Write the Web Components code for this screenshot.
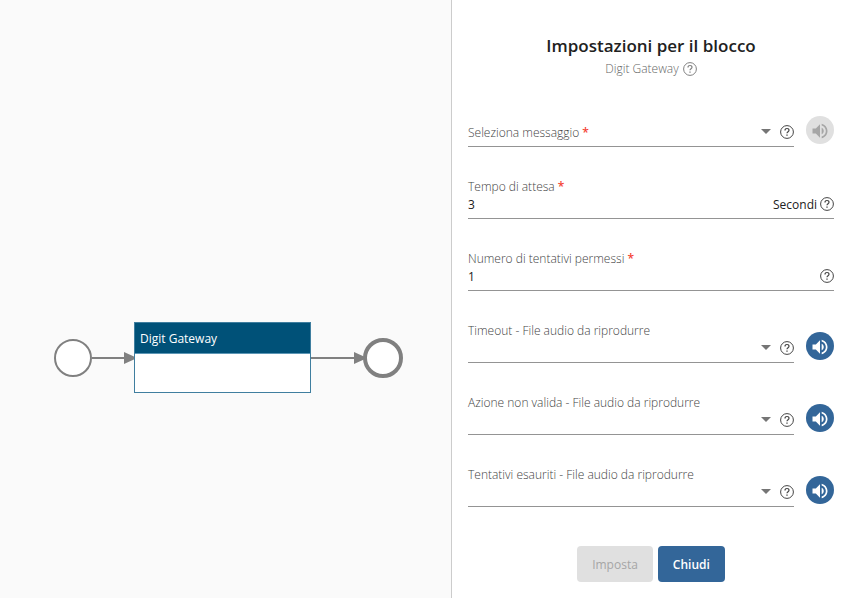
<!DOCTYPE html>
<html lang="it">
<head>
<meta charset="utf-8">
<title>Impostazioni per il blocco</title>
<style>
  body { margin: 0; font: 12px/18px "Open Sans", "Noto Sans", sans-serif; color: #212121; background: #fff; }
</style>
</head>
<body>
<flow-editor>
  <flow-canvas slot="canvas">
    <flow-event kind="start" label="Inizio" style="left:54px;top:339px"></flow-event>
    <flow-link style="left:92px;top:352px;width:43px"></flow-link>
    <flow-block style="left:134px;top:322px">Digit Gateway</flow-block>
    <flow-link style="left:311px;top:352px;width:54px"></flow-link>
    <flow-event kind="end" label="Fine" style="left:363px;top:338px"></flow-event>
  </flow-canvas>
  <settings-panel slot="panel">
    <span slot="title">Impostazioni per il blocco</span>
    <span slot="subtitle">Digit Gateway</span>
    <form-field kind="select" label="Seleziona messaggio" required inside muted></form-field>
    <form-field label="Tempo di attesa" value="3" required>Secondi</form-field>
    <form-field label="Numero di tentativi permessi" value="1" required></form-field>
    <form-field kind="select" label="Timeout - File audio da riprodurre"></form-field>
    <form-field kind="select" label="Azione non valida - File audio da riprodurre"></form-field>
    <form-field kind="select" label="Tentativi esauriti - File audio da riprodurre"></form-field>
    <action-button slot="actions" disabled>Imposta</action-button>
    <action-button slot="actions">Chiudi</action-button>
  </settings-panel>
</flow-editor>
<script>
class Base extends HTMLElement {
  connectedCallback() {
    if (!this.shadowRoot) this.attachShadow({ mode: 'open' }).innerHTML = this.render();
  }
}

customElements.define('flow-editor', class extends Base {
  render() { return `
    <style>
      :host { display: grid; grid-template-columns: minmax(0, 1fr) 393px; min-height: 100vh; }
    </style>
    <slot name="canvas"></slot><slot name="panel"></slot>`; }
});

customElements.define('flow-canvas', class extends Base {
  render() { return `
    <style>
      :host { display: block; position: relative; overflow: hidden; background: #fafafa; }
      ::slotted(*) { position: absolute; }
    </style>
    <slot></slot>`; }
});

customElements.define('flow-event', class extends Base {
  render() {
    const end = this.getAttribute('kind') === 'end';
    const size = end ? 40 : 38, stroke = end ? 4 : 2;
    return `
    <style>
      :host { display: block; }
      svg { display: block; }
    </style>
    <svg width="${size}" height="${size}" role="img" aria-label="${this.getAttribute('label')}">
      <circle cx="${size / 2}" cy="${size / 2}" r="${(size - stroke) / 2}" fill="#fff" stroke="#808080" stroke-width="${stroke}"/>
    </svg>`; }
});

customElements.define('flow-link', class extends Base {
  render() { return `
    <style>
      :host { display: flex; align-items: center; height: 12px; }
      i { flex: 1; height: 2px; background: #808080; }
      svg { display: block; }
    </style>
    <i></i><svg width="11" height="12" aria-hidden="true"><path d="M0 0v12l11-5V5z" fill="#808080"/></svg>`; }
});

customElements.define('flow-block', class extends Base {
  render() { return `
    <style>
      :host { display: block; box-sizing: border-box; width: 177px; border: 1px solid #3f7e9f; background: #fff; }
      header { padding: 7px 5px 5px; background: #005178; border-bottom: 1px solid #5c96b5; color: #fff; }
      div { height: 38px; }
    </style>
    <header><slot></slot></header><div></div>`; }
});

customElements.define('help-button', class extends Base {
  render() { return `
    <style>
      :host { display: block; flex: none; color: #444; }
      button { display: block; padding: 0; border: 0; background: none; color: inherit; cursor: pointer; }
      svg { display: block; }
    </style>
    <button type="button" aria-label="Aiuto">
      <svg width="14" height="14" viewBox="0 0 14 14" fill="none" stroke="currentColor">
        <circle cx="7" cy="7" r="6.4"/>
        <path stroke-width="1.2" d="M5 5.500C5 4.200 5.900 3.500 7 3.500s2 .7 2 1.800C9 6.700 7 6.700 7 8.300"/>
        <path stroke-width="1.3" d="M7 9.500v1.300"/>
      </svg>
    </button>`; }
});

customElements.define('audio-button', class extends Base {
  render() { return `
    <style>
      :host { display: block; flex: none; }
      button { box-sizing: border-box; display: grid; place-items: center; width: 28px; height: 28px; padding: 2px 0 0; border: 0; border-radius: 50%; background: #336699; color: #fff; cursor: pointer; }
      button:disabled { background: #e0e0e0; color: #a6a6a6; cursor: default; }
      svg { display: block; }
    </style>
    <button type="button" aria-label="Riproduci audio" ${this.hasAttribute('disabled') ? 'disabled' : ''}>
      <svg width="20" height="20" viewBox="0 0 24 24" fill="currentColor">
        <path d="M3 9v6h4l5 5V4L7 9H3zm13.500 3c0-1.770-1.020-3.290-2.500-4.030v8.050c1.480-.73 2.500-2.250 2.500-4.020zM14 3.230v2.060c2.890.86 5 3.540 5 6.710s-2.110 5.850-5 6.710v2.060c4.010-.91 7-4.490 7-8.770s-2.990-7.860-7-8.770z"/>
      </svg>
    </button>`; }
});

customElements.define('form-field', class extends Base {
  render() {
    const select = this.getAttribute('kind') === 'select';
    const required = this.hasAttribute('required');
    return `
    <style>
      :host { display: flex; align-items: flex-end; gap: 12px; }
      .field { flex: 1; min-width: 0; display: grid; grid-template-rows: 18px 18px; padding-bottom: 4px; border-bottom: 1px solid #949494; }
      label { grid-area: 1 / 1; color: #444; font-weight: 300; pointer-events: none; }
      :host([inside]) label { grid-row: 2; }
      b { font-weight: 600; color: #f44336; }
      .row { grid-area: 2 / 1; display: flex; align-items: center; gap: 3px; min-width: 0; }
      .pick { flex: 1; min-width: 0; display: grid; align-items: center; }
      .pick > * { grid-area: 1 / 1; }
      .caret { justify-self: end; pointer-events: none; margin: 0 6px 4px 0; }
      help-button { padding-bottom: 2px; }
      input, select { appearance: none; flex: 1; min-width: 0; width: 100%; height: 18px; margin: 0; padding: 0; border: 0; outline: 0; background: none; font: inherit; color: #212121; }
      audio-button { padding-bottom: 3px; }
    </style>
    <div class="field">
      <label for="control">${this.getAttribute('label')}${required ? ' <b>*</b>' : ''}</label>
      <div class="row">
        ${select ? `
        <div class="pick">
          <select id="control" ${required ? 'required' : ''}><option value=""></option></select>
          <svg class="caret" width="10" height="5" aria-hidden="true"><path d="M0 0h10L5 5z" fill="#757575"/></svg>
        </div>` : `<input id="control" type="text" inputmode="numeric" value="${this.getAttribute('value')}" ${required ? 'required' : ''}>`}
        <slot></slot>
        <help-button></help-button>
      </div>
    </div>
    ${select ? `<audio-button ${this.hasAttribute('muted') ? 'disabled' : ''}></audio-button>` : ''}`; }
});

customElements.define('action-button', class extends Base {
  render() { return `
    <style>
      :host { display: block; }
      button { height: 36px; padding: 2px 15px 0; border: 0; border-radius: 4px; background: #336699; color: #fff; font: inherit; font-weight: 600; cursor: pointer; }
      button:disabled { background: #e0e0e0; color: #a6a6a6; font-weight: 400; cursor: default; }
    </style>
    <button type="button" ${this.hasAttribute('disabled') ? 'disabled' : ''}><slot></slot></button>`; }
});

customElements.define('settings-panel', class extends Base {
  render() { return `
    <style>
      :host { display: block; box-sizing: border-box; padding: 34px 10px 16px 16px; border-left: 1px solid #ccc; background: #fff; }
      header { text-align: center; padding-bottom: 28px; }
      h1 { margin: 0; font-size: 17px; line-height: 24px; font-weight: 600; }
      p { display: flex; justify-content: center; align-items: center; gap: 4px; margin: 0; padding-top: 2px; color: #666; font-weight: 300; }
      help-button { color: #808080; }
      form { display: grid; gap: 31px; }
      footer { display: flex; justify-content: center; gap: 5px; padding-top: 8px; }
    </style>
    <header>
      <h1><slot name="title"></slot></h1>
      <p><slot name="subtitle"></slot><help-button></help-button></p>
    </header>
    <form>
      <slot></slot>
      <footer><slot name="actions"></slot></footer>
    </form>`; }
});
</script>
</body>
</html>
